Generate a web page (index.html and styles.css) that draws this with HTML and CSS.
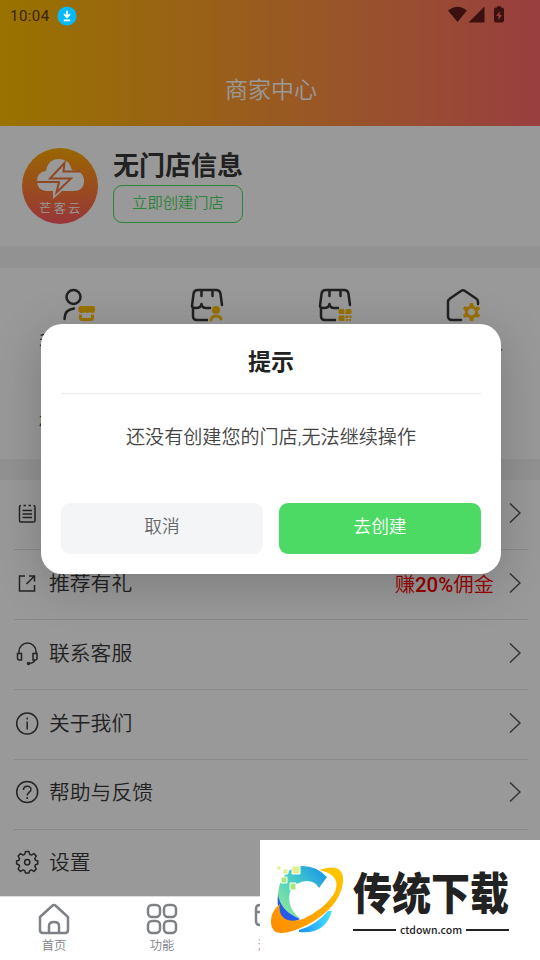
FILE: index.html
```html
<!DOCTYPE html>
<html lang="zh-CN">
<head>
<meta charset="utf-8">
<title>商家中心</title>
<link rel="stylesheet" href="styles.css">
</head>
<body>
<div class="screen">
  <header class="header">
    <div class="status">
      <span class="clock">10:04</span>
      <svg class="download" width="20" height="20" viewBox="0 0 20 20"><circle cx="10" cy="10" r="9.6" fill="#05b9fb"/><path d="M10 4.7v6M7 8.2l3 3 3-3M6.8 14.3h6.4" fill="none" stroke="#fff" stroke-width="1.7"/></svg>
      <svg class="signals" width="58" height="18" viewBox="0 0 58 18"><path d="M0 4.6Q9.500-3 19 4.600L9.500 16ZM20.500 16.500 36.500.500v16ZM46 3.500q0-2 2-2h1V.300h4v1.200h1q2 0 2 2v11q0 2-2 2h-6q-2 0-2-2z" fill="#641c19"/><path d="m51.700 5-3.500 5h2.300v4l3.500-5h-2.300z" fill="#f66761"/></svg>
    </div>
    <h1 class="title">商家中心</h1>
  </header>

  <section class="profile">
    <svg class="avatar" width="76" height="76" viewBox="0 0 76 76">
      <defs><linearGradient id="warm" x2="0" y2="1"><stop stop-color="#ffab00"/><stop offset="1" stop-color="#ff5962"/></linearGradient></defs>
      <circle cx="38" cy="38" r="38" fill="url(#warm)"/>
      <path d="M24 43Q15 42 15 33q0-9 9-10Q26 11 37 11q10 0 13 11 12 1 12 11 0 10-11 10H40L31 51V43z" fill="#fff"/>
      <path d="M58 23.500H41.500L42.500 15 28 30.500H49L34.500 44.500 37 34H15" fill="none" stroke="#f0793c" stroke-width="2"/>
      <text x="39" y="65" text-anchor="middle" class="avatar-text">芒客云</text>
    </svg>
    <div class="profile-info">
      <h2 class="name">无门店信息</h2>
      <span class="create">立即创建门店</span>
    </div>
  </section>

  <section class="tools">
    <div class="tool">
      <svg width="34" height="34" viewBox="0 0 34 34" class="line-icon"><circle cx="11.500" cy="9" r="7"/><path d="M2.500 31q0-9.500 9.500-10.500"/><path class="gold" d="M18 18h13q2 0 2 2v3q0 2-2.500 2-1.500 0-2.500-1-1 1-2.500 1T23 24q-1 1-2.500 1-4 0-4-2v-3q0-2 1.500-2zM17 26.500h3V30h9v-3.500h3V30q0 3-3 3h-9q-3 0-3-3z"/></svg>
      <span>我的资料</span>
    </div>
    <div class="tool">
      <svg width="34" height="34" viewBox="0 0 34 34" class="line-icon"><path d="M2 18 3.500 6Q4 2 8 2h18q4 0 4.500 4L32 17M11.500 3v5M22.500 3v5M2 18q0 2 4 2 5 0 5.500-4Q12 20 16 20h4M3 20v8q0 4 4 4h10"/><circle class="gold" cx="26" cy="22" r="4"/><path d="M21 32q1-4 5-4t5 3" class="gold-line"/></svg>
      <span>员工管理</span>
    </div>
    <div class="tool">
      <svg width="34" height="34" viewBox="0 0 34 34" class="line-icon"><path d="M2 18 3.500 6Q4 2 8 2h18q4 0 4.500 4L32 17M11.500 3v5M22.500 3v5M2 18q0 2 4 2 5 0 5.500-4Q12 20 16 20h4M3 20v8q0 4 4 4h10"/><path class="gold" d="M22 21h3q1.500 0 1.500 1.500V26H22q-1.500 0-1.500-1.500v-2Q20.500 21 22 21zM29 21h3q1.500 0 1.500 1.500v2Q33.500 26 32 26h-4.500v-3.500Q27.500 21 29 21zM22 27.500h4.500V33H22q-1.500 0-1.500-1.500V29q0-1.500 1.500-1.500zM27.500 27.500h3V30h-3zM31.500 27.500h2V30h-2zM28 31h2v2h-2zM31 31h2v2h-2z"/></svg>
      <span>门店码</span>
    </div>
    <div class="tool">
      <svg width="34" height="34" viewBox="0 0 34 34" class="line-icon"><path d="M15 32H6q-4 0-4-4V14q0-2 2-3.500L15 3q2-1.500 4 0l11 7.500q2 1 2 3.500v2"/><path class="gold" d="M24 15h3l.8 3 1.800 1 3-.8 1.500 2.600-2.200 2.200v2l2.200 2.200-1.500 2.600-3-.8-1.800 1-.8 3h-3l-.8-3-1.800-1-3 .8-1.500-2.600 2.200-2.200v-2l-2.200-2.200 1.500-2.600 3 .8 1.800-1zM25.500 20.500a3.500 3.500 0 1 0 .1 0z" fill-rule="evenodd"/></svg>
      <span>我的客人</span>
    </div>
    <div class="tool second"><span>权限管理</span></div>
  </section>

  <section class="menu">
    <div class="row"><svg class="row-icon" viewBox="0 0 26 26"><path d="M7 5.500q-1.500 0-1.500 1.500v13.500q0 1.500 1.500 1.500h12.500q1.500 0 1.500-1.500V7q0-1.500-1.500-1.500M9.500 5.500H12M14.500 5.500H17M8.500 10.500h9.500M8.500 14h9.500M8.500 17.500h9.500"/></svg><span class="label">订单</span><svg class="arrow" viewBox="0 0 12 22"><path d="m1 1.500 10 9.500L1 20.500"/></svg></div>
    <div class="row"><svg class="row-icon" viewBox="0 0 26 26"><path d="M11 6H5.500v15h15V15M15 6h5.500v5.500M20 6.500l-7.500 7.500"/></svg><span class="label">推荐有礼</span><span class="commission">赚<b>20%</b>佣金</span><svg class="arrow" viewBox="0 0 12 22"><path d="m1 1.500 10 9.500L1 20.500"/></svg></div>
    <div class="row"><svg class="row-icon" viewBox="0 0 26 26"><path d="M5 13v-1.500a8.500 8.500 0 0 1 17 0V13M3.500 13.500h4v6.500h-2q-2 0-2-2zM19 13.500h4V18q0 2-2 2h-2zM21 20q-1 3-6 3.500"/><circle cx="14.500" cy="23.500" r="1"/></svg><span class="label">联系客服</span><svg class="arrow" viewBox="0 0 12 22"><path d="m1 1.500 10 9.500L1 20.500"/></svg></div>
    <div class="row"><svg class="row-icon" viewBox="0 0 26 26"><circle cx="13.200" cy="13.500" r="10.500"/><path d="M13.200 11.500v8M13.200 7.500v2"/></svg><span class="label">关于我们</span><svg class="arrow" viewBox="0 0 12 22"><path d="m1 1.500 10 9.500L1 20.500"/></svg></div>
    <div class="row raised"><svg class="row-icon" viewBox="0 0 26 26"><circle cx="13.200" cy="13" r="10.500"/><path d="M9.500 11c0-5 7.500-5 7.500-.5 0 3-3.800 2.800-3.800 6M13.200 18v2"/></svg><span class="label">帮助与反馈</span><svg class="arrow" viewBox="0 0 12 22"><path d="m1 1.500 10 9.500L1 20.500"/></svg></div>
    <div class="row raised"><svg class="row-icon" viewBox="0 0 26 26"><path d="M11.500 2.500h3.400l.8 2.900 1.600.7 2.600-1.500 2.400 2.400-1.500 2.600.7 1.600 2.300.8v3l-2.300.8-.7 1.600 1.500 2.600-2.400 2.400-2.600-1.500-1.600.7-.8 2.400h-3.400l-.8-2.400-1.600-.7-2.600 1.500L4.100 20l1.500-2.600-.7-1.600-2.300-.8v-3l2.300-.8.7-1.600L4.100 7l2.400-2.400L9.100 6.100l1.600-.7z" stroke-linejoin="round"/><circle cx="13.200" cy="13.200" r="2.600"/></svg><span class="label">设置</span></div>
  </section>

  <div class="mask">
    <div class="dialog">
      <h3 class="dialog-title">提示</h3>
      <p class="dialog-text">还没有创建您的门店,无法继续操作</p>
      <div class="actions"><button class="cancel">取消</button><button class="confirm">去创建</button></div>
    </div>
  </div>

  <nav class="tabs">
    <div class="tab"><svg width="32" height="32" viewBox="0 0 32 32"><path d="M2 14 14 3q2-2 4 0l12 11v13q0 3-3 3H5q-3 0-3-3zM11 30v-7q0-4 5-4t5 4v7"/></svg><span>首页</span></div>
    <div class="tab"><svg width="32" height="32" viewBox="0 0 32 32"><rect x="2" y="2" width="12" height="12" rx="4"/><rect x="18" y="2" width="12" height="12" rx="4"/><rect x="2" y="18" width="12" height="12" rx="4"/><rect x="18" y="18" width="12" height="12" rx="4"/></svg><span>功能</span></div>
    <div class="tab"><svg width="32" height="32" viewBox="0 0 32 32"><path d="M6 2h20q4 0 4 4v12q0 4-4 4H6q-4 0-4-4V6q0-4 4-4zM2 9h28"/></svg><span>消息</span></div>
  </nav>

  <div class="brand">
    <svg class="brand-mark" width="82" height="76" viewBox="0 0 82 76">
      <defs>
        <linearGradient id="sea" x1="0" y1="1" x2="1" y2="0"><stop stop-color="#a5ee88"/><stop offset=".5" stop-color="#48d1c4"/><stop offset="1" stop-color="#158df0"/></linearGradient>
        <linearGradient id="sun" x1="0" y1="1" x2="1" y2="0"><stop stop-color="#ff8a00"/><stop offset="1" stop-color="#ffca00"/></linearGradient>
        <linearGradient id="sky"><stop stop-color="#168ff4"/><stop offset="1" stop-color="#48e2ff"/></linearGradient>
      </defs>
      <path d="M59 13Q45-1 27 3 9 12 10 36q1 15 13 22l9-3Q18 43 22 28q6-11 17-11 8 0 12 7z" fill="url(#sea)"/>
      <path d="M10 30q-2 20 7 27 9 2 15-2-20-8-22-25z" fill="#2759ed"/>
      <path d="M31 66Q47 62 60 47h4Q57 71 31 68z" fill="url(#sky)"/>
      <path d="M51 6Q77-3 75 19 71 44 39 61 4 78 3 59 2 48 12 40q-2 9 4 14 6 5 19 1 20-9 31-25Q75 11 51 6z" fill="url(#sun)"/>
      <g stroke="#fff"><path d="M24 2h8v8h-8zM15 5h5v5h-5zM9 2h4v4H9z" fill="#e0f08c"/><path d="M13 13h6v6h-6zM22 19h6v7h-6z" fill="#a9e878"/></g>
    </svg>
    <div class="brand-words"><div class="brand-name">传统下载</div><div class="brand-site">ctdown.com</div></div>
  </div>
</div>
</body>
</html>
```
FILE: styles.css
```css
* { box-sizing: border-box; }
body { margin: 0; font-family: Roboto, "Noto Sans CJK SC", sans-serif; font-weight: 350; color: #383838; }
h1, h2, h3, p { margin: 0; font-weight: 350; }
svg { display: block; flex: none; }
.screen { position: relative; width: 540px; height: 960px; overflow: hidden; background: #fff; display: flex; flex-direction: column; }
.header { height: 126px; flex: none; background: linear-gradient(90deg, #ffbf00 0%, #ff9f2b 40%, #ff8a4a 67%, #ff696b 100%); }
.status { height: 32px; display: flex; align-items: center; padding: 0 34px 0 10px; }
.clock { width: 47px; font-size: 15px; font-weight: 400; letter-spacing: .45px; color: #5c3b00; }
.download { position: relative; z-index: 3; }
.signals { margin-left: auto; margin-top: -2px; }
.title { margin: 41px 0 0 2px; text-align: center; color: #fff; font-size: 23px; line-height: 35px; }

.profile { height: 120px; flex: none; display: flex; padding: 22px; gap: 15px; }
.avatar-text { font-size: 12px; letter-spacing: 2.5px; fill: #fff; }
.name { height: 34px; font-size: 26px; line-height: 37px; font-weight: 700; }
.create { display: block; margin-top: 3px; width: 130px; height: 38px; border: 1px solid #4cd964; border-radius: 9px; color: #4cd964; font-size: 15.300px; line-height: 35px; text-align: center; }

.tools { height: 234px; flex: none; border: solid #f4f4f4; border-width: 22px 0 21px; padding: 20px 13px 0 15px; display: grid; grid-template-columns: repeat(4, 128px); grid-template-rows: 80px 80px; }
.tool { display: flex; flex-direction: column; align-items: center; font-size: 20px; line-height: 26px; gap: 8px; }
.second { padding-top: 41px; }
.line-icon { fill: none; stroke: #383838; stroke-width: 2.500; stroke-linecap: round; stroke-linejoin: round; }
.gold { fill: #ffbf00; stroke: none; }
.gold-line { stroke: #ffbf00; stroke-width: 3; }

.menu { padding: 0 12px 0 14px; }
.row { height: 70px; display: flex; align-items: center; border-bottom: 1px solid #e4e4e4; padding: 0 7px 3px 0; }
.raised { padding-bottom: 5px; }
.row-icon { width: 26px; height: 26px; fill: none; stroke: #3d3d3d; stroke-width: 1.500; }
.label { margin: 0 0 2px 9px; flex: 1; font-size: 20.800px; }
.commission { font-size: 20.400px; color: #f00; margin-right: 15px; }
.commission b { font-weight: 500; }
.arrow { width: 12px; height: 22px; fill: none; stroke: #555; stroke-width: 1.500; }

.mask { position: absolute; z-index: 2; inset: 0 0 64px; background: rgba(0, 0, 0, .4); padding: 324px 39px 0 41px; }
.dialog { width: 460px; height: 250px; padding: 0 20px 20px; border-radius: 21px; background: #fff; box-shadow: 0 10px 50px rgba(0, 0, 0, .2); display: flex; flex-direction: column; }
.dialog-title { height: 70px; border-bottom: 1px solid #ebebeb; text-align: center; font-size: 23px; line-height: 78px; font-weight: 700; color: #222; }
.dialog-text { height: 109px; padding-top: 29px; text-align: center; font-size: 19.100px; line-height: 30px; color: #444; }
.actions { display: flex; gap: 16px; }
.actions button { flex: 1; height: 51px; border: 0; border-radius: 9px; padding: 0 0 7px; font: 350 17.700px Roboto, "Noto Sans CJK SC", sans-serif; }
.actions .cancel { color: #666; background: #f4f5f7; }
.actions .confirm { color: #fff; background: #4cd964; }

.tabs { position: absolute; z-index: 3; inset: auto 0 0; height: 64px; background: #fff; border-top: 1px solid #ddd; display: flex; }
.tab { width: 108px; padding-top: 6px; display: flex; flex-direction: column; align-items: center; font-size: 12.300px; line-height: 18px; color: #7d8085; }
.tab svg { fill: none; stroke: #7e8287; stroke-width: 2.500; }
.tab span { margin-top: 2px; }

.brand { position: absolute; z-index: 4; right: 0; bottom: 0; width: 280px; height: 120px; background: #fff; display: flex; padding-top: 24px; padding-left: 8px; gap: 3px; }
.brand-words { width: 156px; padding-top: 3px; }
.brand-name { height: 46px; margin-bottom: 5px; font: 900 39px/46px "Noto Sans CJK SC", sans-serif; color: #222; white-space: nowrap; transform: scaleY(1.15); }
.brand-site { display: flex; align-items: center; gap: 4px; font: 500 10.500px/24px "Noto Sans CJK SC", sans-serif; color: #222; }
.brand-site::before, .brand-site::after { content: ""; flex: 1; height: 2px; background: #222; }
```
